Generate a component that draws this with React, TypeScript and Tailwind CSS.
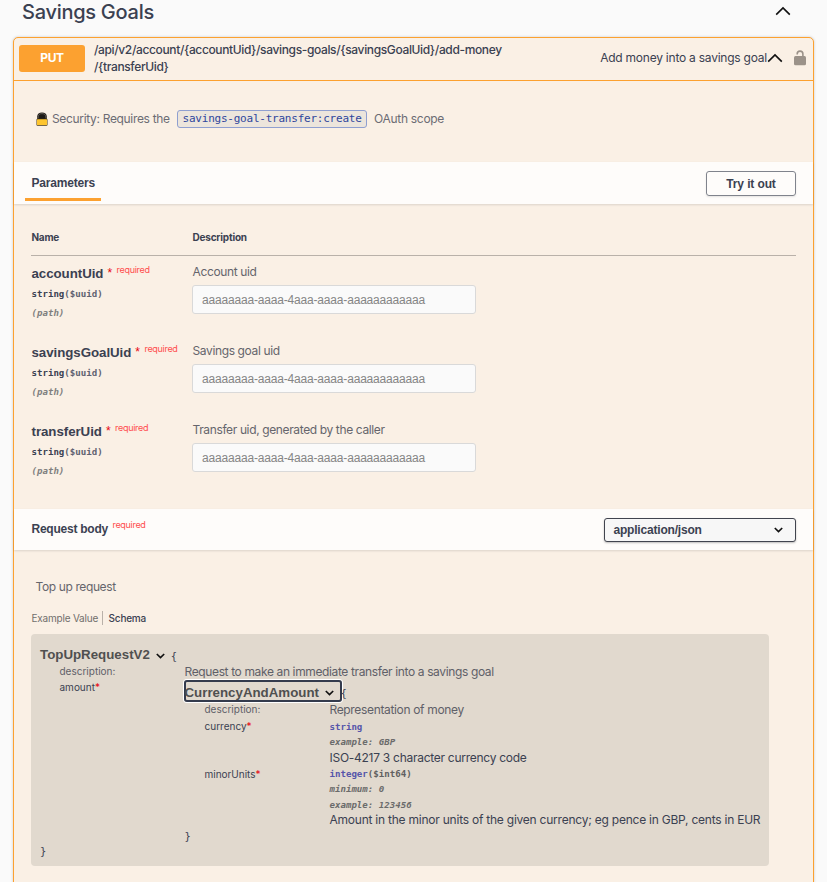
import type { ReactNode } from "react";

function ChevronUp() {
  return (
    <svg width="16" height="10" viewBox="0 0 16 10" fill="none" className="shrink-0">
      <path d="M1.2 8.6 8 1.9l6.8 6.7" stroke="#111" strokeWidth="1.6" />
    </svg>
  );
}

function ChevronDown() {
  return (
    <svg width="9" height="6" viewBox="0 0 9 6" fill="none" className="shrink-0">
      <path d="M.8 1 4.5 4.5 8.2 1" stroke="#111" strokeWidth="1.7" />
    </svg>
  );
}

function UnlockedIcon() {
  return (
    <svg width="12" height="16" viewBox="0 0 12 16" className="shrink-0">
      <path d="M3.2 4.6V4C3.2 2.2 4.4 1.1 6 1.1S8.9 2.2 8.9 4v3" fill="none" stroke="#9b9289" strokeWidth="1.6" />
      <rect x="0" y="6" width="12" height="9.3" rx="1.5" fill="#9b9289" />
    </svg>
  );
}

function PadlockIcon() {
  return (
    <svg width="12" height="14" viewBox="0 0 12 14" className="shrink-0">
      <path d="M1.2 13V4.6C1.2 2.2 3.2.6 6 .6s4.8 1.6 4.8 4V13Z" fill="#1d1a16" />
      <path d="M2.2 6.4V4.9C2.2 2.9 3.7 1.6 6 1.6s3.8 1.3 3.8 3.3v1.5" fill="none" stroke="#77736c" strokeWidth=".7" />
      <rect x=".5" y="6.8" width="11" height="7" rx="1" fill="#4a3a14" />
      <rect x="1" y="7.3" width="10" height="5.8" rx=".4" fill="#fdc52f" />
    </svg>
  );
}

function Required({ className = "" }: { className?: string }) {
  return <span className={`font-['Inter'] text-[9px] font-normal tracking-[-0.3px] text-[#ff4d4d] ${className}`}>required</span>;
}

function Mono({ children, className = "" }: { children: ReactNode; className?: string }) {
  return <span className={`font-['DejaVu_Sans_Mono'] text-[9.1px] ${className}`}>{children}</span>;
}

function Brace({ children, className = "" }: { children: ReactNode; className?: string }) {
  return <span className={`font-['DejaVu_Sans_Mono'] text-[10.5px] font-normal text-[#3b4151] ${className}`}>{children}</span>;
}

function ParameterRow({ name, description }: { name: string; description: string }) {
  return (
    <div className="flex h-[79px] pt-2">
      <div className="w-[161px] pl-[0.5px]">
        <div className="flex h-[19px] items-center">
          <span className="font-['Liberation_Sans'] text-[13.3px] font-bold tracking-[-0.05px]">{name}</span>
          <span className="-mt-px ml-1 font-['Liberation_Sans'] text-[12px] leading-none text-red-600">*</span>
          <Required className="-mt-[8px] ml-[4.5px]" />
        </div>
        <div className="flex h-[23px] items-center pt-px">
          <Mono className="font-bold">string<span className="text-[#5f6270]">($uuid)</span></Mono>
        </div>
        <div className="flex h-[14px] items-center pt-px">
          <Mono className="font-bold text-[#808080] italic">(path)</Mono>
        </div>
      </div>
      <div>
        <div className="flex h-[17px] items-center pb-[2px] pl-[0.5px] text-[12px] tracking-[-0.37px] text-[#65656c]">{description}</div>
        <div className="mt-1 flex h-[29px] w-[284px] items-center rounded-[3px] border border-[#d9d9d9] bg-[#fafafa] pl-[9px] font-['Liberation_Sans'] text-[12px] tracking-[-0.18px] text-[#858585]">
          aaaaaaaa-aaaa-4aaa-aaaa-aaaaaaaaaaaa
        </div>
      </div>
    </div>
  );
}

function Property({ name, children }: { name: string; children: ReactNode }) {
  return (
    <div className="flex pl-5">
      <div className="flex h-[17px] w-[125px] items-center text-[10px]">
        {name}
        <span className="text-red-600">*</span>
      </div>
      <div>{children}</div>
    </div>
  );
}

export default function App() {
  return (
    <div className="h-[882px] overflow-hidden bg-[#fafafa] font-['Inter',sans-serif] whitespace-nowrap text-[#3b4151]">
      <header className="flex h-[37px] items-start justify-between pr-[36px] pl-[22px]">
        <h2 className="text-[20px] leading-[25px] font-[450] tracking-[-0.27px]">Savings Goals</h2>
        <div className="pt-[6px]"><ChevronUp /></div>
      </header>

      <section className="ml-[13px] h-[900px] w-[801px] rounded-[5px] border border-[#fca130] bg-[#faf0e5] shadow-[0_0_3px_rgba(0,0,0,0.19)]">
        <div className="flex h-[43px] items-center border-b border-[#fca130] pr-[7px] pb-[2px] pl-[5px]">
          <div className="flex h-[27px] w-[66px] items-center justify-center rounded-[3px] bg-[#fca130] text-[12px] font-bold tracking-[-0.4px] text-white">PUT</div>
          <div className="ml-[9px] text-[12px] leading-[17px] font-[450] tracking-[-0.36px]">
            <div>/api/v2/account/&#123;accountUid&#125;/savings-goals/&#123;savingsGoalUid&#125;/add-money</div>
            <div>/&#123;transferUid&#125;</div>
          </div>
          <div className="ml-auto text-[12px] tracking-[-0.23px]">Add money into a savings goal</div>
          <ChevronUp />
          <div className="ml-[11px]"><UnlockedIcon /></div>
        </div>

        <div className="flex h-[81px] items-center pb-[5px] pl-[22px] text-[12px] tracking-[-0.34px] text-[#6c6c74]">
          <PadlockIcon />
          <span className="ml-1 tracking-[-0.33px]">Security: Requires the</span>
          <code className="ml-[7.4px] flex h-[18px] w-[190px] items-center justify-center rounded-[3px] border border-[#8f9fd0] bg-[#ece5dc] font-['DejaVu_Sans_Mono'] text-[11px] tracking-[-0.23px] text-[#2f459c]">
            savings-goal-transfer:create
          </code>
          <span className="ml-[7px] tracking-[-0.3px]">OAuth scope</span>
        </div>

        <div className="flex h-[42px] items-center justify-between bg-[#fefcfa] pr-[17px] pl-[11px] shadow-[0_1px_2px_rgba(0,0,0,0.12)]">
          <div className="-mt-px flex h-[36px] w-[76px] items-center border-b-[3px] border-[#fca130] pt-[4px] pl-[6.5px] font-['Liberation_Sans'] text-[12px] font-bold tracking-[-0.19px]">
            Parameters
          </div>
          <button className="h-[25px] w-[90px] rounded-[3px] border border-[#80838c] pt-px font-['Liberation_Sans'] text-[12px] font-bold tracking-[-0.12px] shadow-[0_1px_2px_rgba(0,0,0,0.1)]">
            Try it out
          </button>
        </div>

        <div className="h-[305px] pt-[20px] pr-[17px] pl-[17px]">
          <div className="flex h-[32px] border-b border-[#b9b1a9] pt-[5px] text-[10px] leading-[17px] font-bold tracking-[-0.25px]">
            <div className="w-[161.5px] pl-[0.5px]">Name</div>
            <div className="tracking-[-0.2px]">Description</div>
          </div>
          <ParameterRow name="accountUid" description="Account uid" />
          <ParameterRow name="savingsGoalUid" description="Savings goal uid" />
          <ParameterRow name="transferUid" description="Transfer uid, generated by the caller" />
        </div>

        <div className="flex h-[41px] items-center justify-between bg-[#fefcfa] pr-[17px] pl-[17.5px] shadow-[0_1px_2px_rgba(0,0,0,0.12)]">
          <div className="flex items-center pb-[2px] font-['Liberation_Sans'] text-[12px] font-bold tracking-[-0.24px]">
            Request body <Required className="-mt-[8px] ml-[4.5px]" />
          </div>
          <div className="flex h-[24px] w-[192px] items-center justify-between rounded-[3px] border-[1.5px] border-[#41444e] bg-[#f7f7f7] pr-[12px] pl-[8.5px] font-['Liberation_Sans'] text-[12px] font-bold tracking-[-0.2px] shadow-[0_1px_2px_rgba(0,0,0,0.25)]">
            application/json
            <ChevronDown />
          </div>
        </div>

        <div className="pt-[29px] pl-[17px]">
          <div className="pl-[4.5px] text-[12px] leading-[16px] tracking-[-0.38px] text-[#65656c]">Top up request</div>
          <div className="mt-[16px] flex h-[14px] items-center text-[10px]">
            <span className="pr-1 pl-[0.5px] tracking-[-0.2px] text-[#716f6c]">Example Value</span>
            <span className="h-[14px] border-l border-[#b9b1a9] pl-[5.5px] leading-[14px] font-medium tracking-[-0.22px]">Schema</span>
          </div>

          <div className="mt-[9px] h-[232px] w-[738px] rounded-[4px] bg-[#e1d9ce] pt-[13px] pl-[9px]">
            <div className="flex h-[16px] items-center font-['Liberation_Sans'] text-[13.3px] font-bold text-[#505050]">
              TopUpRequestV2
              <span className="mt-[2px] ml-[6px]"><ChevronDown /></span>
              <Brace className="mt-[3px] ml-[6px]">&#123;</Brace>
            </div>
            <div className="flex h-[17px] items-center pl-[19.5px] text-[10px] text-[#5f6068]">
              <span className="w-[125px]">description:</span>
              <span className="text-[12px] tracking-[-0.37px]">Request to make an immediate transfer into a savings goal</span>
            </div>
            <div className="flex pl-[19.5px]">
              <div className="flex h-[15px] w-[125px] items-center text-[10px]">
                amount<span className="text-red-600">*</span>
              </div>
              <div>
                <div className="-ml-px flex h-[22px] items-center">
                  <button className="flex h-[22px] w-[158px] items-center rounded-[3px] border-2 border-[#343b4d] pt-[3px] font-['Liberation_Sans'] text-[13.3px] font-bold text-[#505050] shadow-[0_0_0_1px_#fff]">
                    <span className="-ml-px">CurrencyAndAmount</span>
                    <span className="mt-px ml-[6px]"><ChevronDown /></span>
                  </button>
                  <Brace className="mt-[5px] -ml-px">&#123;</Brace>
                </div>
                <div className="flex h-[16px] items-center pl-5 text-[10px] text-[#5f6068]">
                  <span className="w-[125px] pb-px">description:</span>
                  <span className="text-[12px] tracking-[-0.34px]">Representation of money</span>
                </div>
                <Property name="currency">
                  <div className="flex h-[17px] items-center pt-[2px]"><Mono className="font-bold text-[#5555aa]">string</Mono></div>
                  <div className="flex h-[14px] items-center pt-[2px]"><Mono className="font-bold text-[#6b6b6b] italic">example: GBP</Mono></div>
                  <div className="flex h-[17px] items-center text-[12px] tracking-[-0.27px]">ISO-4217 3 character currency code</div>
                </Property>
                <Property name="minorUnits">
                  <div className="flex h-[15px] items-center pt-[2px]"><Mono className="font-bold text-[#5555aa]">integer<span className="text-[#606060]">($int64)</span></Mono></div>
                  <div className="flex h-[15px] items-center pt-[2px]"><Mono className="font-bold text-[#6b6b6b] italic">minimum: 0</Mono></div>
                  <div className="flex h-[16px] items-center pt-[3px]"><Mono className="font-bold text-[#6b6b6b] italic">example: 123456</Mono></div>
                  <div className="flex h-[16px] items-center text-[12px] tracking-[-0.23px]">Amount in the minor units of the given currency; eg pence in GBP, cents in EUR</div>
                </Property>
                <div className="flex h-[18px] items-center"><Brace>&#125;</Brace></div>
              </div>
            </div>
            <div className="flex h-[10px] items-center"><Brace className="leading-[10px]">&#125;</Brace></div>
          </div>
        </div>
      </section>
    </div>
  );
}
